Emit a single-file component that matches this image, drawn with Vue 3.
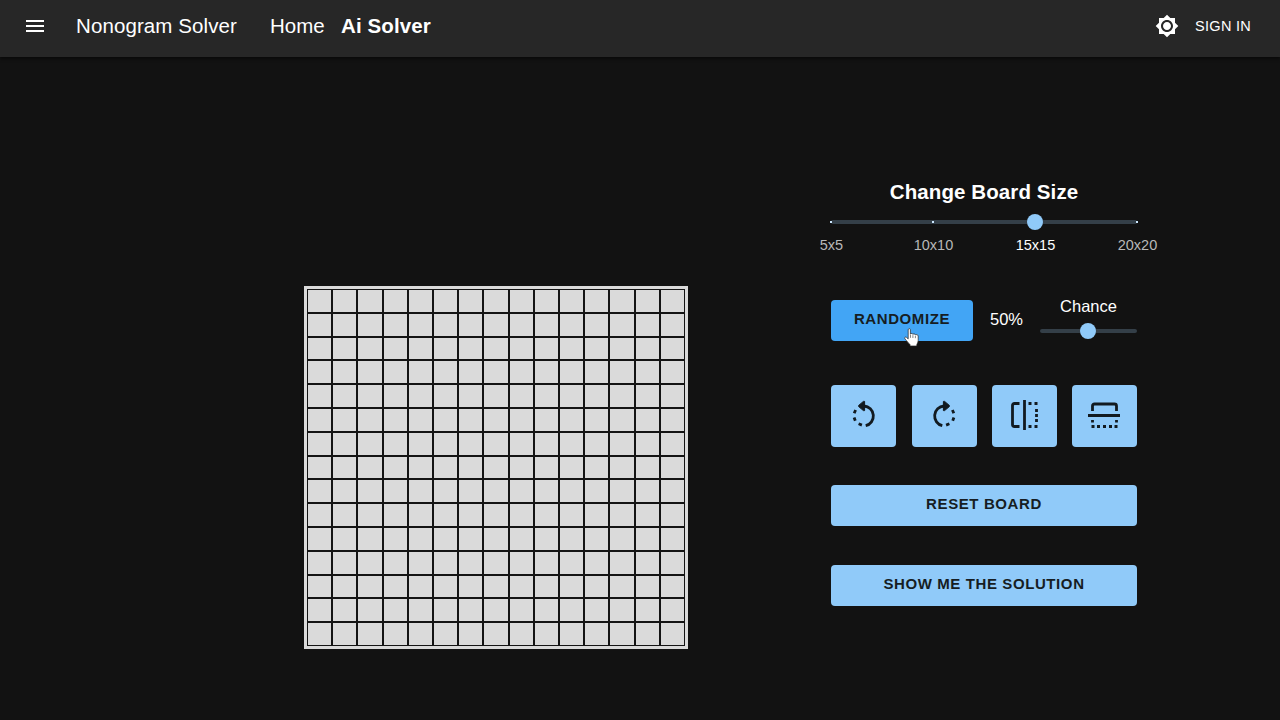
<script setup>
const sizes = ['5x5', '10x10', '15x15', '20x20']
const selected = '15x15'
const cells = 15 * 15
</script>

<template>
  <div class="app">
    <header class="bar">
      <svg class="menu" viewBox="0 0 24 24"><path d="M3 18h18v-2H3v2zm0-5h18v-2H3v2zm0-7v2h18V6H3z" /></svg>
      <span class="brand">Nonogram Solver</span>
      <nav>
        <span class="home">Home</span>
        <span class="current">Ai Solver</span>
      </nav>
      <svg class="sun" viewBox="0 0 24 24"><path d="M20 8.69V4h-4.69L12 .69 8.69 4H4v4.69L.69 12 4 15.31V20h4.69L12 23.31 15.31 20H20v-4.69L23.31 12 20 8.69zM12 18c-3.31 0-6-2.69-6-6s2.69-6 6-6 6 2.69 6 6-2.69 6-6 6zm0-10c-2.21 0-4 1.79-4 4s1.79 4 4 4 4-1.79 4-4-1.79-4-4-4z" /></svg>
      <span class="sign">SIGN IN</span>
    </header>
    <main>
      <section class="board">
        <div class="grid"><i v-for="n in cells" :key="n"></i></div>
      </section>
      <section class="panel">
        <h2>Change Board Size</h2>
        <div class="slider">
          <span class="mark"></span><span class="mark"></span><span class="mark"></span><span class="mark"></span>
          <b class="thumb size-thumb"></b>
        </div>
        <div class="labels">
          <span v-for="s in sizes" :key="s" :class="{ on: s === selected }">{{ s }}</span>
        </div>
        <div class="random">
          <button class="hover">RANDOMIZE
            <svg class="cursor" viewBox="0 0 16 20"><path d="M4.200 1.800c0-1.600 2.200-1.600 2.200 0v4.300c.2-1 2.500-.8 2.500.3.4-.9 2.500-.5 2.500.6.5-.8 2.800-.4 2.800 1v4.700c0 1.800-1.200 2.700-1.400 4.100v1.200H6v-1.400C4.400 15 3.200 13.300 1 10.900 0 9.600 1.400 8.400 2.800 9.600l1.400 1.300z" /><path class="creases" d="M6.500 6.500v3.300M8.900 7.200v2.800M11.400 8v2.200" /></svg>
          </button>
          <span class="percent">50%</span>
          <div class="chance">
            <span>Chance</span>
            <div class="slider"><b class="thumb"></b></div>
          </div>
        </div>
        <div class="tools">
          <button><svg viewBox="0 0 28 28"><g class="rotate"><path d="M13 5h1a10 10 0 0 1 1.700 19.700" /><path class="solid" d="M14.600.4v9.200h-1.200L8.600 5.500V4.500L13.400.4z" /><path d="M11.900 24.100l-3.300-1.300M5.300 19.700l-1.200-3.300M4.200 12.300l1.400-3.300" /></g></svg></button>
          <button><svg viewBox="0 0 28 28"><g class="rotate flip"><path d="M13 5h1a10 10 0 0 1 1.700 19.700" /><path class="solid" d="M14.600.4v9.200h-1.200L8.600 5.500V4.500L13.400.4z" /><path d="M11.900 24.100l-3.300-1.300M5.300 19.700l-1.200-3.300M4.200 12.300l1.400-3.300" /></g></svg></button>
          <button><svg class="mirror" viewBox="0 0 34 34"><path d="M12.500 5.500h-5q-2 0-2 2v19q0 2 2 2h5M17.500 2v30" /><path class="dots" d="M21.500 5.500h3M27.500 5.500h3M21.500 28.500h3M27.500 28.500h3M29.500 11v3M29.500 16v3M29.500 21v3" /></svg></button>
          <button><svg class="mirror" viewBox="0 0 34 34"><path d="M5.500 13V8q0-2 2-2h20q2 0 2 2v5M1 17.500h32" /><path class="dots" d="M5.500 22v2.500M29.500 22v2.500M4.500 28.500h3M10 28.500h3M16 28.500h3M22 28.500h3M27.500 28.500h3" /></svg></button>
        </div>
        <button class="reset">RESET BOARD</button>
        <button class="solution">SHOW ME THE SOLUTION</button>
      </section>
    </main>
  </div>
</template>

<style>
body { background: #121212; }
</style>
<style scoped>
* { box-sizing: border-box; }
.app { width: 1280px; height: 720px; overflow: hidden; background: #121212; color: #fff; font-family: "Liberation Sans", Arial, sans-serif; }
.bar { height: 57px; padding: 0 27px 5px 23px; display: flex; align-items: center; background: #272727; box-shadow: 0 2px 3px #0008; white-space: nowrap; }
.bar svg { fill: #fff; flex: none; }
.menu { width: 24px; height: 24px; margin-right: 29px; }
.brand { width: 194px; font-size: 20.5px; letter-spacing: .1px; }
nav { display: flex; font-size: 20.5px; }
.home { width: 71px; }
.current { font-weight: bold; letter-spacing: .1px; }
.sun { width: 24px; height: 24px; margin-left: auto; }
.sign { width: 58px; margin-left: 16px; font-size: 14.5px; letter-spacing: .3px; }
main { display: flex; }
.board { width: 384px; height: 363px; margin: 229px 143px 0 304px; padding: 3px; background: #dadada; }
.grid { width: 378px; height: 357px; display: grid; grid-template: repeat(15, 1fr) / repeat(15, 1fr); border: 1px solid #141414; gap: 2px; background: #141414; }
.grid i { background: #dadada; }
.panel { width: 306px; padding-top: 123px; }
h2 { height: 24px; line-height: 24px; margin: 0; font-size: 20.5px; letter-spacing: .1px; text-align: center; white-space: nowrap; }
.slider { position: relative; height: 4px; border-radius: 2px; background: #343f48; display: flex; align-items: center; justify-content: space-between; }
h2 + .slider { margin-top: 16px; }
.mark { width: 2px; height: 2px; background: #cce8ff; }
.mark:first-child { margin-left: -1px; }
.mark:nth-child(4) { margin-right: -1px; }
.thumb { position: absolute; width: 16px; height: 16px; border-radius: 50%; background: #90caf9; left: calc(50% - 8.500px); top: -6px; }
.size-thumb { left: calc(66.667% - 8px); }
.labels { display: grid; grid-template-columns: repeat(4, 102px); width: 408px; margin: 11px 0 0 -50.500px; height: 20px; line-height: 20px; text-align: center; font-size: 14.5px; color: #b8b8b8; }
.on { color: #fff; }
.random { display: flex; align-items: center; height: 41px; margin-top: 45px; }
button { padding: 0; border: 0; border-radius: 4px; background: #90caf9; color: #161d23; font: 600 15px "Liberation Sans", Arial, sans-serif; letter-spacing: .6px; display: flex; align-items: center; justify-content: center; height: 41px; width: 100%; }
.random button { position: relative; width: 142px; background: #42a5f5; padding-bottom: 4px; flex: none; }
.cursor { position: absolute; width: 16px; height: 20px; left: 73px; top: 28px; fill: #fff; stroke: #222; stroke-width: .7; }
.creases { stroke: #333; stroke-width: .6; }
.percent { width: 67px; padding: 0 0 2px 17px; font-size: 16.5px; }
.chance { width: 97px; height: 41px; font-size: 16.5px; text-align: center; }
.chance > span { display: block; height: 20px; line-height: 20px; margin-top: -4px; }
.chance .slider { margin-top: 13px; }
.tools { display: grid; grid-template-columns: 65px 65px 65px 65px; column-gap: 15px; padding-left: 1px; margin-top: 44px; }
.tools button { height: 62px; padding-bottom: 2px; }
.tools button:first-child { margin-left: -1px; }
.tools svg { width: 28px; height: 28px; stroke: #121a20; stroke-width: 2.800; fill: none; overflow: visible; }
.tools .mirror { width: 34px; height: 34px; margin-right: 2px; stroke-width: 2.800; }
.rotate .solid { fill: #121a20; stroke-width: 1; }
.flip { transform: matrix(-1, 0, 0, 1, 27, 0); }
.reset { margin-top: 38px; padding-bottom: 4px; }
.solution { margin-top: 39px; padding-bottom: 4px; }
</style>
